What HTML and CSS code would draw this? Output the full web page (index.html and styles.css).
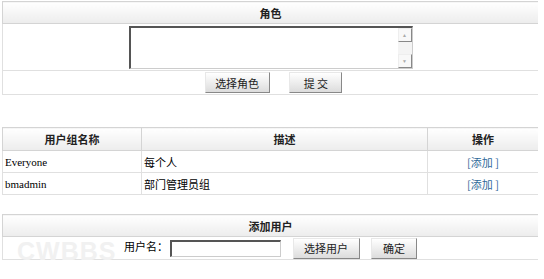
FILE: index.html
```html
<!DOCTYPE html>
<html lang="zh-CN">
<head>
 <meta charset="UTF-8">
 <title>用户组</title>
 <link rel="stylesheet" href="styles.css">
</head>
<body>
 <table class="tbl tbl-role">
 <tr><th>角色</th></tr>
 <tr><td class="center">
 <div class="listbox">
 <div class="listbox-body"></div>
 <div class="scrollbar"><span class="arrow">&#9650;</span><span class="arrow">&#9660;</span></div>
 </div>
 </td></tr>
 <tr><td class="center btn-row">
 <button class="btn btn-wide">选择角色</button>
 <button class="btn btn-submit">提 交</button>
 </td></tr>
 </table>

 <table class="tbl tbl-groups">
 <tr>
 <th class="col-name">用户组名称</th>
 <th class="col-desc">描述</th>
 <th class="col-op">操作</th>
 </tr>
 <tr>
 <td>Everyone</td>
 <td>每个人</td>
 <td class="center"><a href="#">[添加 ]</a></td>
 </tr>
 <tr>
 <td>bmadmin</td>
 <td>部门管理员组</td>
 <td class="center"><a href="#">[添加 ]</a></td>
 </tr>
 </table>

 <table class="tbl tbl-user">
 <tr><th>添加用户</th></tr>
 <tr><td class="center user-row">
 <span class="watermark">CWBBS</span>
 <span class="user-label">用户名：</span><input type="text" class="user-input">
 <button class="btn btn-user">选择用户</button>
 <button class="btn btn-ok">确定</button>
 </td></tr>
 </table>
</body>
</html>
```
FILE: styles.css
```css
body {
margin: 1px 6px 0 2px;
font-family: "Liberation Serif", "Noto Sans CJK SC", serif;
font-size: 11px;
color: #000;
background: #fff;
}
.tbl {
width: 537px;
border-collapse: collapse;
border: 1px solid #d4d4d4;
}
.tbl th {
height: 21px;
padding: 0;
font-family: "Noto Sans CJK SC", sans-serif;
font-size: 11px;
font-weight: bold;
color: #222;
background: linear-gradient(#ffffff, #ececec);
border: 1px solid #d4d4d4;
}
.tbl td {
height: 20px;
padding: 0 2px;
border: 1px solid #e0e0e0;
}
.tbl-groups th {
height: 22px;
}
.tbl-groups td {
height: 21px;
}
.center {
text-align: center;
}
.tbl-groups {
margin-top: 32px;
}
.tbl-user {
margin-top: 19px;
}
.listbox {
display: inline-flex;
width: 284px;
height: 43px;
margin: 2px 0 1px 0;
vertical-align: top;
border-top: 2px solid #555;
border-left: 2px solid #555;
border-right: 1px solid #ccc;
border-bottom: 1px solid #ccc;
box-sizing: border-box;
}
.listbox-body {
flex: 1;
}
.scrollbar {
width: 14px;
display: flex;
flex-direction: column;
justify-content: space-between;
background: #f4f4f4;
}
.arrow {
height: 14px;
font-size: 5px;
line-height: 13px;
color: #aaa;
border: 1px solid #888;
border-top-color: #eee;
border-left-color: #eee;
box-sizing: border-box;
background: #f8f8f8;
}
.btn {
height: 21px;
padding: 0;
font-family: "Noto Sans CJK SC", sans-serif;
font-size: 11px;
color: #222;
background: linear-gradient(#ffffff, #dcdcdc);
border: 1px solid #888;
border-top-color: #e8e8e8;
border-left-color: #e8e8e8;
vertical-align: middle;
}
.btn-row {
height: 23px !important;
padding-left: 8px !important;
}
.btn-wide {
width: 65px;
margin-right: 17px;
}
.btn-submit {
width: 53px;
}
.col-name {
width: 138px;
}
.col-op {
width: 110px;
}
.tbl-groups td:nth-child(2) {
font-family: "Noto Sans CJK SC", sans-serif;
}
a {
color: #2f6a9a;
text-decoration: none;
font-family: "Noto Sans CJK SC", sans-serif;
}
.user-row {
position: relative;
height: 22px !important;
font-family: "Noto Sans CJK SC", sans-serif;
}
.watermark {
position: absolute;
left: 14px;
top: 0;
font-family: "Liberation Sans", sans-serif;
font-size: 25px;
font-weight: bold;
color: #f1f1f1;
letter-spacing: 1px;
}
.user-label {
margin-right: 2px;
}
.user-input {
width: 111px;
height: 17px;
padding: 0;
margin-right: 9px;
border-top: 2px solid #555;
border-left: 2px solid #555;
border-right: 1px solid #ccc;
border-bottom: 1px solid #ccc;
box-sizing: border-box;
vertical-align: middle;
}
.btn-user {
width: 67px;
margin-right: 9px;
}
.btn-ok {
width: 46px;
}
```
